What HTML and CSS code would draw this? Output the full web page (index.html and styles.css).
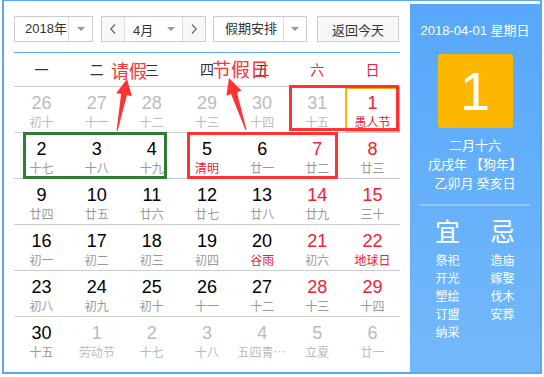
FILE: index.html
```html
<!DOCTYPE html>
<html lang="zh-CN">
<head>
<meta charset="UTF-8" />
<meta name="viewport" content="width=device-width, initial-scale=1.0" />
<title>万年历</title>
<link rel="stylesheet" href="styles.css">
</head>
<body>

<div class="calendar">
  <div class="cal-main">
    <div class="toolbar">
      <div class="select year-select">
        <span class="select-text">2018年</span>
        <span class="select-arrow"><i class="caret"></i></span>
      </div>
      <div class="month-group">
        <button class="nav-btn"><svg width="6" height="10" viewBox="0 0 6 10"><path d="M5 0.5 L0.8 5 L5 9.5" fill="none" stroke="#666" stroke-width="1.2"/></svg></button>
        <div class="month-select"><span>4月</span><i class="caret"></i></div>
        <button class="nav-btn"><svg width="6" height="10" viewBox="0 0 6 10"><path d="M1 0.5 L5.2 5 L1 9.5" fill="none" stroke="#666" stroke-width="1.2"/></svg></button>
      </div>
      <div class="select holiday-select">
        <span class="select-text">假期安排</span>
        <span class="select-arrow"><i class="caret"></i></span>
      </div>
      <button class="today-btn">返回今天</button>
    </div>

    <div class="week-head">
      <div>一</div><div>二</div><div>三</div><div>四</div><div>五</div>
      <div class="weekend">六</div><div class="weekend">日</div>
    </div>

    <div class="days">
      <div class="day other"><span class="num">26</span><span class="lunar">初十</span></div>
      <div class="day other"><span class="num">27</span><span class="lunar">十一</span></div>
      <div class="day other"><span class="num">28</span><span class="lunar">十二</span></div>
      <div class="day other"><span class="num">29</span><span class="lunar">十三</span></div>
      <div class="day other"><span class="num">30</span><span class="lunar">十四</span></div>
      <div class="day other"><span class="num">31</span><span class="lunar">十五</span></div>
      <div class="day weekend festival today"><span class="num">1</span><span class="lunar">愚人节</span></div>

      <div class="day"><span class="num">2</span><span class="lunar">十七</span></div>
      <div class="day"><span class="num">3</span><span class="lunar">十八</span></div>
      <div class="day"><span class="num">4</span><span class="lunar">十九</span></div>
      <div class="day festival"><span class="num">5</span><span class="lunar">清明</span></div>
      <div class="day"><span class="num">6</span><span class="lunar">廿一</span></div>
      <div class="day weekend"><span class="num">7</span><span class="lunar">廿二</span></div>
      <div class="day weekend"><span class="num">8</span><span class="lunar">廿三</span></div>

      <div class="day"><span class="num">9</span><span class="lunar">廿四</span></div>
      <div class="day"><span class="num">10</span><span class="lunar">廿五</span></div>
      <div class="day"><span class="num">11</span><span class="lunar">廿六</span></div>
      <div class="day"><span class="num">12</span><span class="lunar">廿七</span></div>
      <div class="day"><span class="num">13</span><span class="lunar">廿八</span></div>
      <div class="day weekend"><span class="num">14</span><span class="lunar">廿九</span></div>
      <div class="day weekend"><span class="num">15</span><span class="lunar">三十</span></div>

      <div class="day"><span class="num">16</span><span class="lunar">初一</span></div>
      <div class="day"><span class="num">17</span><span class="lunar">初二</span></div>
      <div class="day"><span class="num">18</span><span class="lunar">初三</span></div>
      <div class="day"><span class="num">19</span><span class="lunar">初四</span></div>
      <div class="day festival"><span class="num">20</span><span class="lunar">谷雨</span></div>
      <div class="day weekend"><span class="num">21</span><span class="lunar">初六</span></div>
      <div class="day weekend festival"><span class="num">22</span><span class="lunar">地球日</span></div>

      <div class="day"><span class="num">23</span><span class="lunar">初八</span></div>
      <div class="day"><span class="num">24</span><span class="lunar">初九</span></div>
      <div class="day"><span class="num">25</span><span class="lunar">初十</span></div>
      <div class="day"><span class="num">26</span><span class="lunar">十一</span></div>
      <div class="day"><span class="num">27</span><span class="lunar">十二</span></div>
      <div class="day weekend"><span class="num">28</span><span class="lunar">十三</span></div>
      <div class="day weekend"><span class="num">29</span><span class="lunar">十四</span></div>

      <div class="day"><span class="num">30</span><span class="lunar">十五</span></div>
      <div class="day other"><span class="num">1</span><span class="lunar">劳动节</span></div>
      <div class="day other"><span class="num">2</span><span class="lunar">十七</span></div>
      <div class="day other"><span class="num">3</span><span class="lunar">十八</span></div>
      <div class="day other"><span class="num">4</span><span class="lunar">五四青年节</span></div>
      <div class="day other"><span class="num">5</span><span class="lunar">立夏</span></div>
      <div class="day other"><span class="num">6</span><span class="lunar">廿一</span></div>
    </div>
  </div>

  <div class="cal-side">
    <div class="side-date">2018-04-01 星期日</div>
    <div class="side-day">1</div>
    <div class="side-lunar">
      <div>二月十六</div>
      <div>戊戌年 【狗年】</div>
      <div>乙卯月 癸亥日</div>
    </div>
    <div class="side-luck">
      <div class="luck-col">
        <div class="luck-title">宜</div>
        <div class="luck-list">
          <div>祭祀</div><div>开光</div><div>塑绘</div><div>订盟</div><div>纳采</div>
        </div>
      </div>
      <div class="luck-col">
        <div class="luck-title">忌</div>
        <div class="luck-list">
          <div>造庙</div><div>嫁娶</div><div>伐木</div><div>安葬</div>
        </div>
      </div>
    </div>
  </div>
</div>

<!-- annotations drawn over the screenshot -->
<svg class="marks" width="544" height="377" viewBox="0 0 544 377">
  <rect x="24.5" y="133.5" width="141" height="44" fill="none" stroke="#2e7d32" stroke-width="3"/>
  <rect x="188.5" y="133.5" width="148" height="44" fill="none" stroke="#ff3333" stroke-width="3"/>
  <rect x="290.5" y="86.5" width="107" height="43" fill="none" stroke="#ff3333" stroke-width="3"/>
  <polygon points="116.5,131 121.1,94.1 116.1,93.2 127,79 131.9,96.2 126.9,95.3 117.5,131" fill="#ff3333"/>
  <polygon points="245.5,130.2 231.1,94.1 226.4,95.7 229,78 241.6,90.7 236.9,92.3 246.5,129.8" fill="#ff3333"/>
</svg>
<span class="note note-leave">请假</span>
<span class="note note-holiday">节假日</span>

</body>
</html>
```

FILE: styles.css
```css
body {
  margin: 0;
  position: relative;
  font-family: "Liberation Sans", "Noto Sans CJK SC", sans-serif;
  color: #333;
  background: #fff;
}

.calendar {
  display: flex;
  width: 536px;
  height: 371px;
  margin: -1px 0 0 2px;
  border: 2px solid #5aa7f7;
  background: #fff;
}

.cal-main {
  width: 386px;
  padding: 15px 10px 0;
}

/* toolbar */
.toolbar {
  display: flex;
  height: 26px;
  padding-bottom: 10px;
  border-bottom: 1px solid #5aa7f7;
}

.select {
  display: flex;
  box-sizing: border-box;
  height: 26px;
  border: 1px solid #ccc;
  background: #fff;
  font-size: 13px;
}

.select-text {
  flex: 1;
  line-height: 24px;
  white-space: nowrap;
}

.select-arrow {
  display: flex;
  align-items: center;
  justify-content: center;
  border-left: 1px solid #ddd;
}

.caret {
  width: 0;
  height: 0;
  border-left: 4px solid transparent;
  border-right: 4px solid transparent;
  border-top: 4px solid #999;
}

.year-select {
  width: 79px;
}

.year-select .select-text {
  padding-left: 10px;
}

.year-select .select-arrow {
  width: 23px;
}

.month-group {
  display: flex;
  box-sizing: border-box;
  width: 105px;
  height: 26px;
  margin-left: 8px;
  border: 1px solid #ccc;
}

.nav-btn {
  width: 22px;
  padding: 0;
  border: none;
  background: #f7f7f7;
  display: flex;
  align-items: center;
  justify-content: center;
}

.month-select {
  flex: 1;
  display: flex;
  align-items: center;
  justify-content: space-between;
  padding: 0 7px 0 8px;
  border-left: 1px solid #ddd;
  border-right: 1px solid #ddd;
  background: #fff;
  font-size: 13px;
}

.holiday-select {
  width: 94px;
  margin-left: 7px;
}

.holiday-select .select-text {
  padding-left: 11px;
}

.holiday-select .select-arrow {
  width: 22px;
}

.today-btn {
  box-sizing: border-box;
  width: 82px;
  height: 26px;
  margin-left: 10px;
  padding: 0;
  border: 1px solid #ccc;
  background: #f7f7f7;
  color: #333;
  font-family: "Noto Sans CJK SC", sans-serif;
  font-size: 13px;
}

/* grid */
.week-head {
  display: grid;
  grid-template-columns: repeat(7, 1fr);
  height: 33px;
  line-height: 33px;
  border-bottom: 1px solid #ccc;
  text-align: center;
  font-family: "Noto Sans CJK SC", sans-serif;
  font-size: 14px;
  color: #333;
}

.week-head .weekend {
  color: #ee2233;
}

.days {
  display: grid;
  grid-template-columns: repeat(7, 1fr);
}

.day {
  box-sizing: border-box;
  height: 46px;
  padding-top: 6px;
  border-bottom: 1px solid #ccc;
  text-align: center;
  overflow: hidden;
}

.days .day:nth-last-child(-n+7) {
  border-bottom: none;
}

.num {
  display: block;
  font-size: 18px;
  line-height: 20px;
  color: #000;
}

.lunar {
  display: block;
  padding: 0 3px;
  font-family: "Noto Sans CJK SC", sans-serif;
  font-size: 12px;
  line-height: 18px;
  color: #999;
  white-space: nowrap;
  overflow: hidden;
  text-overflow: ellipsis;
}

.day.weekend .num {
  color: #ee2233;
}

.day.festival .lunar {
  color: #ee2233;
}

.day.other .num,
.day.other .lunar {
  color: #bbb;
}

.day.today {
  box-shadow: inset 0 0 0 2px #fdb300;
}

/* side panel */
.cal-side {
  width: 130px;
  margin-top: 3px;
  background: linear-gradient(#57a8fa, #74b8fb);
  color: #fff;
  text-align: center;
  font-family: "Noto Sans CJK SC", sans-serif;
}

.side-date {
  padding-top: 19px;
  font-family: "Liberation Sans", "Noto Sans CJK SC", sans-serif;
  font-size: 13px;
  line-height: 16px;
}

.side-day {
  width: 75px;
  height: 74px;
  margin: 15px auto 0;
  border-radius: 3px;
  background: #fdb701;
  font-family: "Liberation Sans", sans-serif;
  font-size: 54px;
  line-height: 74px;
}

.side-lunar {
  margin-top: 7px;
  font-size: 13px;
  line-height: 19px;
}

.side-luck {
  display: flex;
  justify-content: center;
  margin: 12px 10px 0;
  border-top: 2px solid rgba(255, 255, 255, 0.3);
}

.luck-col {
  width: 55px;
}

.luck-title {
  margin-top: 9px;
  font-size: 25px;
  line-height: 30px;
}

.luck-list {
  margin-top: 6px;
  font-size: 12px;
  line-height: 18px;
}

/* annotations */
.marks {
  position: absolute;
  left: 0;
  top: 0;
  pointer-events: none;
}

.note {
  position: absolute;
  color: #ff3333;
  font-family: "Noto Sans CJK SC", sans-serif;
  white-space: nowrap;
}

.note-leave {
  left: 111px;
  top: 61px;
  font-size: 18px;
  line-height: 18px;
}

.note-holiday {
  left: 212px;
  top: 59px;
  font-size: 19px;
  line-height: 19px;
}
```
